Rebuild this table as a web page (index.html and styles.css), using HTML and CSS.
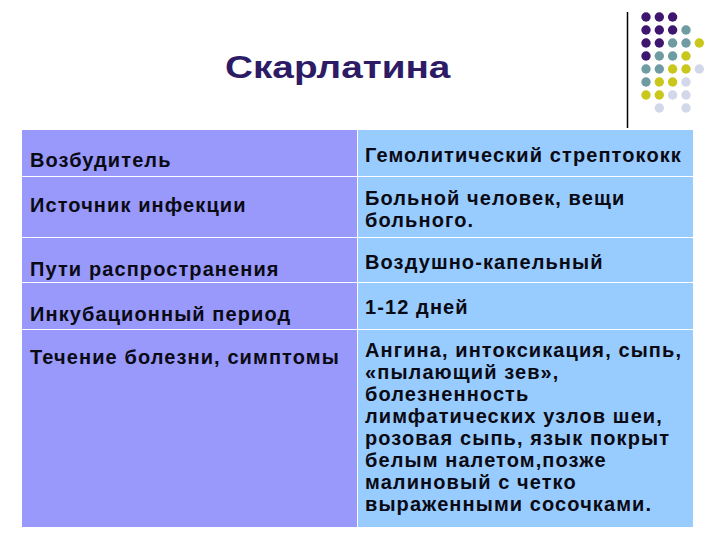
FILE: index.html
```html
<!DOCTYPE html>
<html lang="ru">
<head>
<meta charset="utf-8">
<title>Скарлатина</title>
<link rel="stylesheet" href="styles.css">
</head>
<body>
<div class="slide">
  <header class="header">
    <h1 class="title"><span class="title-text">Скарлатина</span></h1>
    <svg class="decor" width="100" height="130" viewBox="0 0 100 130" aria-hidden="true">
      <line x1="7.5" y1="12" x2="7.5" y2="128" stroke="#000" stroke-width="1.5"/>
      <g fill="#3e1670">
        <circle cx="26" cy="17" r="4.7"/><circle cx="39.3" cy="17" r="4.7"/><circle cx="52.6" cy="17" r="4.7"/>
        <circle cx="26" cy="30" r="4.7"/><circle cx="39.3" cy="30" r="4.7"/><circle cx="52.6" cy="30" r="4.7"/>
        <circle cx="26" cy="43" r="4.7"/><circle cx="39.3" cy="43" r="4.7"/>
        <circle cx="26" cy="56" r="4.7"/>
      </g>
      <g fill="#6e9ca2">
        <circle cx="66" cy="30" r="4.7"/>
        <circle cx="52.6" cy="43" r="4.7"/><circle cx="66" cy="43" r="4.7"/>
        <circle cx="39.3" cy="56" r="4.7"/><circle cx="52.6" cy="56" r="4.7"/>
        <circle cx="26" cy="69" r="4.7"/><circle cx="39.3" cy="69" r="4.7"/>
        <circle cx="26" cy="82" r="4.7"/>
      </g>
      <g fill="#c9c71c">
        <circle cx="79.3" cy="43" r="4.7"/>
        <circle cx="66" cy="56" r="4.7"/>
        <circle cx="52.6" cy="69" r="4.7"/><circle cx="66" cy="69" r="4.7"/>
        <circle cx="39.3" cy="82" r="4.7"/><circle cx="52.6" cy="82" r="4.7"/>
        <circle cx="26" cy="95" r="4.7"/><circle cx="39.3" cy="95" r="4.7"/>
      </g>
      <g fill="#d3d7ea">
        <circle cx="79.3" cy="69" r="4.7"/>
        <circle cx="66" cy="82" r="4.7"/>
        <circle cx="52.6" cy="95" r="4.7"/><circle cx="66" cy="95" r="4.7"/>
        <circle cx="39.3" cy="108" r="4.7"/><circle cx="66" cy="108" r="4.7"/>
      </g>
    </svg>
  </header>
  <div class="table">
    <div class="cell key r1">Возбудитель</div>
    <div class="cell val r1">Гемолитический стрептококк</div>
    <div class="cell key r2">Источник инфекции</div>
    <div class="cell val r2">Больной человек, вещи<br>больного.</div>
    <div class="cell key r3">Пути распространения</div>
    <div class="cell val r3">Воздушно-капельный</div>
    <div class="cell key r4">Инкубационный период</div>
    <div class="cell val r4">1-12 дней</div>
    <div class="cell key r5">Течение болезни, симптомы</div>
    <div class="cell val r5">Ангина, интоксикация, сыпь,<br>«пылающий зев»,<br>болезненность<br>лимфатических узлов шеи,<br>розовая сыпь, язык покрыт<br>белым налетом,позже<br>малиновый с четко<br>выраженными сосочками.</div>
  </div>
</div>
</body>
</html>
```

FILE: styles.css
```css
html, body {
  margin: 0;
  padding: 0;
  background: #ffffff;
}

.slide {
  width: 720px;
  height: 540px;
  font-family: "Liberation Sans", Arial, sans-serif;
  overflow: hidden;
}

.header {
  display: flex;
  height: 130px;
}

.title {
  flex: 1;
  margin: 0;
  padding: 48px 0 0 225px;
  font-size: 32px;
  font-weight: bold;
  line-height: 38px;
  color: #2d1b66;
}

.title-text {
  display: inline-block;
  transform: scaleX(1.21);
  transform-origin: left top;
}

.decor {
  display: block;
  flex: none;
}

.table {
  margin-left: 22px;
  width: 671px;
  display: grid;
  grid-template-columns: 335px 335px;
  grid-template-rows: 46px 60px 44px 46px 197px;
  gap: 1px;
  background: #ffffff;
}

.cell {
  font-size: 20px;
  font-weight: bold;
  line-height: 22px;
  letter-spacing: 1.1px;
  color: #0a0a14;
  white-space: nowrap;
}

.key {
  background: #9999fc;
  padding-left: 8px;
}

.val {
  background: #99ccfe;
  padding-left: 7px;
}

.key.r1 { padding-top: 19px; }
.val.r1 { padding-top: 14px; }
.key.r2 { padding-top: 17px; }
.val.r2 { padding-top: 10px; }
.key.r3 { padding-top: 20px; }
.val.r3 { padding-top: 13px; }
.key.r4 { padding-top: 20px; }
.val.r4 { padding-top: 13px; }
.key.r5 { padding-top: 16px; }
.val.r5 { padding-top: 9px; }
```
